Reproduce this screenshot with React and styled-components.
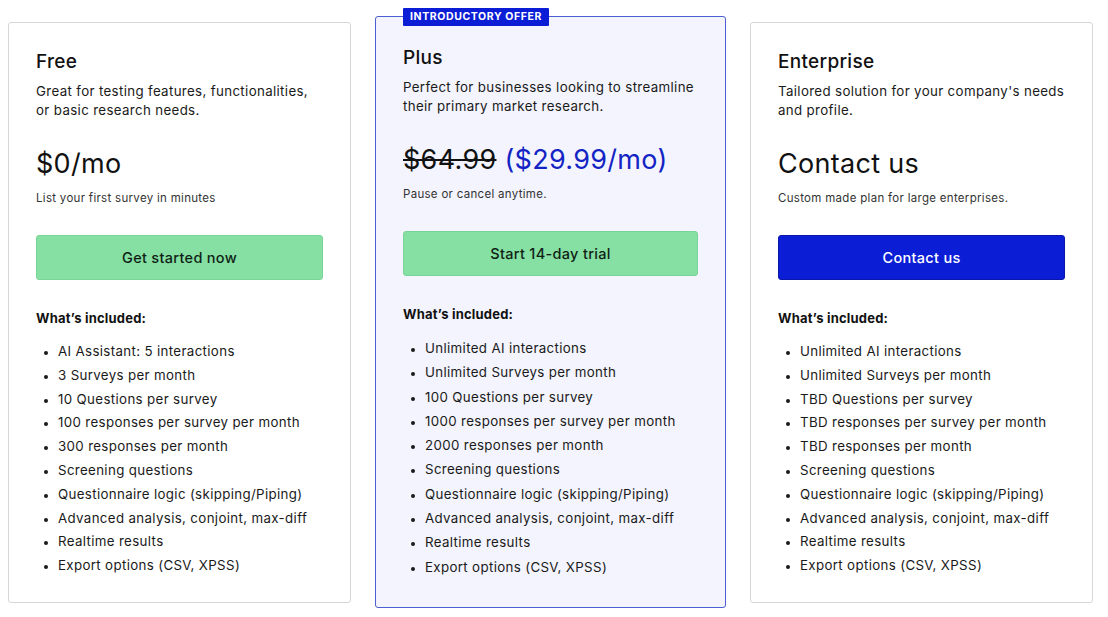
import React from "react";
import styled, { createGlobalStyle } from "styled-components";

const Global = createGlobalStyle`
  body { margin: 0; background: #fff; font-family: Inter, "Liberation Sans", sans-serif; color: #111; }
`;

const Row = styled.div`
  display: flex; align-items: flex-start; gap: 24px;
  padding: 16px 0 0 8px;
`;
const Card = styled.div`
  position: relative;
  box-sizing: border-box;
  width: ${p => (p.$featured ? 351 : 343)}px;
  height: ${p => (p.$featured ? 592 : 581)}px;
  margin-top: ${p => (p.$featured ? 0 : 6)}px;
  border: 1px solid ${p => (p.$featured ? "#4c5ed3" : "#d6d6d6")};
  border-radius: 3px;
  background: ${p => (p.$featured ? "#f3f4fd" : "#fff")};
  padding: ${p => (p.$featured ? "29px 27px 0 27px" : "27px 27px 0 27px")};
`;
const Badge = styled.div`
  position: absolute; top: -9px; left: 27px;
  background: #0b1ed6; color: #fff;
  font-size: 10.5px; font-weight: 700; letter-spacing: 0.6px;
  padding: 2px 7px; border-radius: 1px; line-height: 14px;
`;
const Title = styled.div`font-size: 19px; line-height: 24px; font-weight: 500; letter-spacing: 0.3px;`;
const Desc = styled.div`font-size: 13.3px; letter-spacing: 0.35px; line-height: 19px; margin-top: 8px; height: 38px; color: #1a1a1a;`;
const Price = styled.div`font-size: 27px; line-height: 34px; margin-top: 27px; color: #111; letter-spacing: 0.3px;`;
const Old = styled.span`text-decoration: line-through; text-decoration-thickness: 2px;`;
const New = styled.span`color: #1424c4;`;
const Sub = styled.div`font-size: 11.5px; letter-spacing: 0.3px; margin-top: 9px; line-height: 16px; color: #333;`;
const Button = styled.div`
  margin-top: 29px; height: 45px; border-radius: 3px;
  display: flex; align-items: center; justify-content: center;
  font-size: 14.5px; font-weight: 500; letter-spacing: 0.3px;
  background: ${p => (p.$blue ? "#0b1ed6" : "#86e0a3")};
  color: ${p => (p.$blue ? "#fff" : "#0f1f16")};
  border: 1px solid ${p => (p.$blue ? "#0a17a8" : "#79d597")};
  box-sizing: border-box;
`;
const Included = styled.div`font-size: 13px; font-weight: 700; margin-top: 30px; line-height: 16px; letter-spacing: 0.2px;`;
const List = styled.ul`
  margin: 14px 0 0; padding: 0 0 0 22px;
  li { font-size: 13.3px; letter-spacing: 0.35px; line-height: ${p => (p.$featured ? 24.3 : 23.8)}px; color: #1a1a1a; }
  li::marker { font-size: 11px; }
`;

const plans = [
  {
    title: "Free",
    desc: "Great for testing features, functionalities, or basic research needs.",
    price: <>$0/mo</>,
    sub: "List your first survey in minutes",
    cta: "Get started now",
    items: ["AI Assistant: 5 interactions", "3 Surveys per month", "10 Questions per survey", "100 responses per survey per month", "300 responses per month", "Screening questions", "Questionnaire logic (skipping/Piping)", "Advanced analysis, conjoint, max-diff", "Realtime results", "Export options (CSV, XPSS)"],
  },
  {
    featured: true,
    title: "Plus",
    desc: "Perfect for businesses looking to streamline their primary market research.",
    price: <><Old>$64.99</Old> <New>($29.99/mo)</New></>,
    sub: "Pause or cancel anytime.",
    cta: "Start 14-day trial",
    items: ["Unlimited AI interactions", "Unlimited Surveys per month", "100 Questions per survey", "1000 responses per survey per month", "2000 responses per month", "Screening questions", "Questionnaire logic (skipping/Piping)", "Advanced analysis, conjoint, max-diff", "Realtime results", "Export options (CSV, XPSS)"],
  },
  {
    title: "Enterprise",
    desc: "Tailored solution for your company's needs and profile.",
    price: <>Contact us</>,
    sub: "Custom made plan for large enterprises.",
    cta: "Contact us",
    blue: true,
    items: ["Unlimited AI interactions", "Unlimited Surveys per month", "TBD Questions per survey", "TBD responses per survey per month", "TBD responses per month", "Screening questions", "Questionnaire logic (skipping/Piping)", "Advanced analysis, conjoint, max-diff", "Realtime results", "Export options (CSV, XPSS)"],
  },
];

export default function App() {
  return (
    <>
      <Global />
      <Row>
        {plans.map(p => (
          <Card key={p.title} $featured={p.featured}>
            {p.featured && <Badge>INTRODUCTORY OFFER</Badge>}
            <Title>{p.title}</Title>
            <Desc>{p.desc}</Desc>
            <Price>{p.price}</Price>
            <Sub>{p.sub}</Sub>
            <Button $blue={p.blue}>{p.cta}</Button>
            <Included>What’s included:</Included>
            <List $featured={p.featured}>
              {p.items.map(i => <li key={i}>{i}</li>)}
            </List>
          </Card>
        ))}
      </Row>
    </>
  );
}
